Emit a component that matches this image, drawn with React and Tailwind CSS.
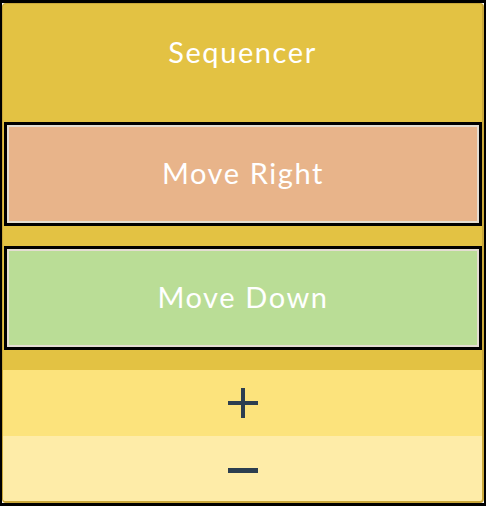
export default function App() {
  const font = { fontFamily: "Lato, 'Noto Sans', sans-serif" };
  return (
    <div className="w-[486px] h-[506px] bg-white border-black border-t-[3px] border-b-[3px] border-x-2" style={font}>
      <div className="h-full rounded-[4px] bg-[#e3c243] border-[#c9a73a] border-l border-t border-r-2 border-b-2 overflow-hidden flex flex-col">
        <div className="h-[97px] pb-[2px] flex items-center justify-center text-white text-[29px] tracking-[1.6px]">
          Sequencer
        </div>
        <div className="mt-[21px] ml-px h-[104px] border-[3px] border-black">
          <div className="h-full pb-[2px] border-2 border-[#e4ddd2] bg-[#e8b48a] flex items-center justify-center text-white text-[29px] tracking-[1.6px]">
            Move Right
          </div>
        </div>
        <div className="mt-[20px] ml-px h-[104px] border-[3px] border-black">
          <div className="h-full pb-[2px] border-2 border-[#e4ddd2] bg-[#badd96] flex items-center justify-center text-white text-[29px] tracking-[1.6px]">
            Move Down
          </div>
        </div>
        <div className="mt-[20px] h-[66px] bg-[#fce37c] flex items-center justify-center">
          <svg width="30" height="30" viewBox="0 0 30 30">
            <rect x="13" y="0" width="4" height="30" fill="#2c3e50" />
            <rect x="0" y="13" width="30" height="4" fill="#2c3e50" />
          </svg>
        </div>
        <div className="flex-1 bg-[#feeca8] flex items-center justify-center">
          <svg width="30" height="30" viewBox="0 0 30 30">
            <rect x="0" y="14" width="30" height="5" fill="#2c3e50" />
          </svg>
        </div>
      </div>
    </div>
  );
}
